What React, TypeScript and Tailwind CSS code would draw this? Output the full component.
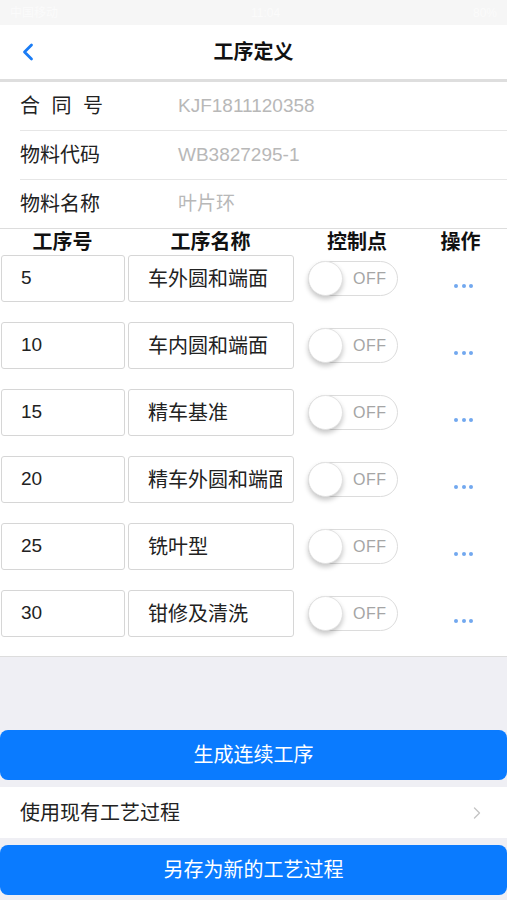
import { ChevronLeft, ChevronRight } from "lucide-react";

const steps = [
  { no: "5", name: "车外圆和端面" },
  { no: "10", name: "车内圆和端面" },
  { no: "15", name: "精车基准" },
  { no: "20", name: "精车外圆和端面" },
  { no: "25", name: "铣叶型" },
  { no: "30", name: "钳修及清洗" },
];

const info = [
  { label: "合同号", value: "KJF1811120358", spaced: true },
  { label: "物料代码", value: "WB3827295-1" },
  { label: "物料名称", value: "叶片环", last: true },
];

function Toggle() {
  return (
    <div className="relative w-[90px] h-[35px] rounded-full border border-[#dcdcdc] bg-white flex items-center">
      <div className="absolute left-[-1px] top-[-1px] w-[35px] h-[35px] rounded-full bg-white border border-[#e2e2e2] shadow-[0_3px_5px_rgba(0,0,0,0.22)]" />
      <span className="ml-[44px] text-[16px] text-[#a5a5a5] tracking-[0.5px]">OFF</span>
    </div>
  );
}

function Dots() {
  return (
    <div className="flex gap-[3.5px] mt-[14px]">
      <span className="w-[4px] h-[4px] rounded-full bg-[#72a8ef]" />
      <span className="w-[4px] h-[4px] rounded-full bg-[#72a8ef]" />
      <span className="w-[4px] h-[4px] rounded-full bg-[#72a8ef]" />
    </div>
  );
}

export default function App() {
  return (
    <div
      className="w-[507px] h-[900px] bg-[#efeff4] flex flex-col overflow-hidden text-[#222]"
      style={{ fontFamily: '"Liberation Sans", "Noto Sans CJK SC", sans-serif' }}
    >
      {/* status bar */}
      <div className="h-[25px] bg-[#f6f6f6] flex items-center justify-between px-[10px] text-[12px] text-[#fbfbfb]">
        <span>中国移动</span>
        <span>11:04</span>
        <span>80%</span>
      </div>

      {/* nav */}
      <div className="h-[54px] bg-white flex items-center relative">
        <ChevronLeft className="absolute left-[14px] text-[#1a7cf5]" size={28} strokeWidth={2.4} />
        <h1 className="flex-1 text-center text-[20px] font-bold text-[#111]">工序定义</h1>
      </div>
      <div className="h-[3px] bg-[#dedede]" />

      {/* info */}
      <div className="bg-white">
        {info.map((r) => (
          <div
            key={r.label}
            className={
              r.last
                ? "h-[49px] pl-[20px] flex items-center border-b border-[#dddddd]"
                : "h-[49px] ml-[20px] flex items-center border-b border-[#e6e6e6]"
            }
          >
            <span className={`w-[158px] text-[20px] text-[#222] ${r.spaced ? "tracking-[11.5px]" : ""}`}>{r.label}</span>
            <span className="text-[19px] text-[#b8b8b8]">{r.value}</span>
          </div>
        ))}
      </div>

      {/* table */}
      <div className="bg-white border-b border-[#dddddd] pb-[19px]">
        <div className="h-[26px] flex items-center text-[20px] font-bold text-[#111]">
          <span className="w-[125px] text-center">工序号</span>
          <span className="w-[171px] text-center">工序名称</span>
          <span className="w-[122px] text-center">控制点</span>
          <span className="flex-1 text-center pr-[4px]">操作</span>
        </div>
        <div className="flex flex-col gap-[20px]">
          {steps.map((s) => (
            <div key={s.no} className="flex items-center h-[47px]">
              <div className="ml-[1px] w-[124px] h-full border border-[#d6d6d6] rounded-[3px] flex items-center pl-[19px] text-[19px]">
                {s.no}
              </div>
              <div className="ml-[3px] w-[166px] h-full border border-[#d6d6d6] rounded-[3px] flex items-center pl-[19px] pr-[11px] text-[20px]">
                <div className="flex-1 overflow-hidden whitespace-nowrap">{s.name}</div>
              </div>
              <div className="ml-[14px]">
                <Toggle />
              </div>
              <div className="flex-1 flex justify-center pl-[22px]">
                <Dots />
              </div>
            </div>
          ))}
        </div>
      </div>

      <div className="h-[73px]" />

      {/* actions */}
      <button className="h-[50px] bg-[#0a7bff] rounded-[8px] text-white text-[20px]">生成连续工序</button>
      <div className="mt-[7px] h-[51px] bg-white flex items-center justify-between pl-[20px] pr-[20px]">
        <span className="text-[20px] text-[#222]">使用现有工艺过程</span>
        <ChevronRight className="text-[#c4c4c4]" size={20} strokeWidth={1.6} />
      </div>
      <button className="mt-[7px] h-[50px] bg-[#0a7bff] rounded-[8px] text-white text-[20px]">另存为新的工艺过程</button>
    </div>
  );
}
